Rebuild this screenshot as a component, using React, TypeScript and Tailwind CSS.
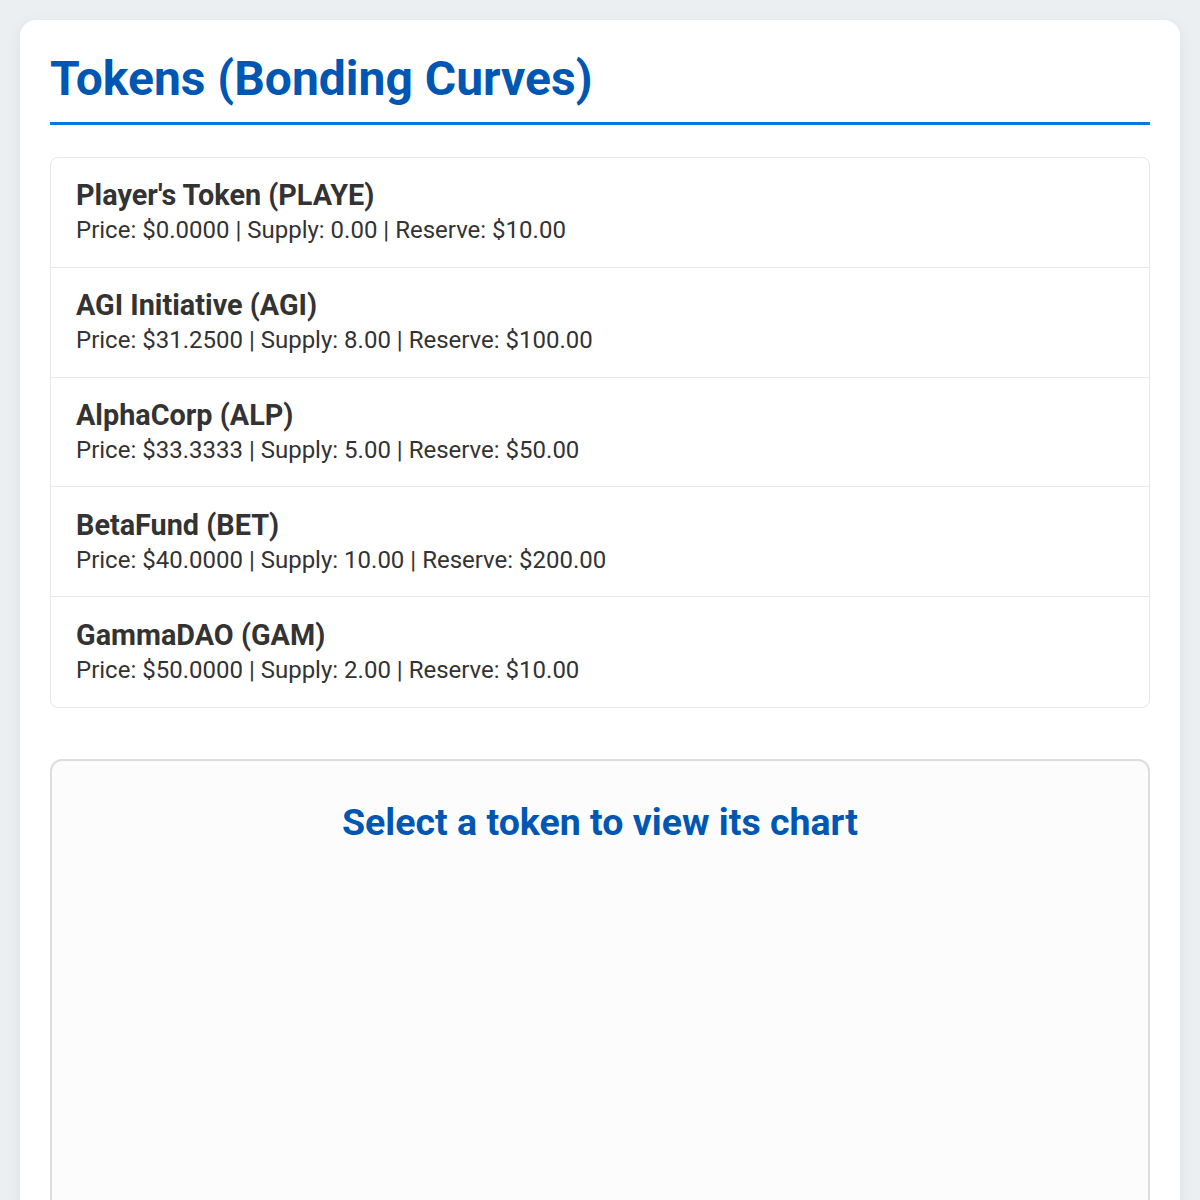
import React from 'react';

const tokens = [
  { name: "Player's Token", symbol: 'PLAYE', price: '0.0000', supply: '0.00', reserve: '10.00' },
  { name: 'AGI Initiative', symbol: 'AGI', price: '31.2500', supply: '8.00', reserve: '100.00' },
  { name: 'AlphaCorp', symbol: 'ALP', price: '33.3333', supply: '5.00', reserve: '50.00' },
  { name: 'BetaFund', symbol: 'BET', price: '40.0000', supply: '10.00', reserve: '200.00' },
  { name: 'GammaDAO', symbol: 'GAM', price: '50.0000', supply: '2.00', reserve: '10.00' },
];

export default function App() {
  return (
    <div className="min-h-[1200px] bg-[#eceff2] p-5 font-['Roboto','Liberation_Sans',sans-serif]">
      <div className="rounded-2xl bg-white p-[30px] shadow-[0_4px_16px_rgba(0,0,0,0.06)]">
        <h2 className="border-b-[3px] border-[#0078e7] pb-[14px] text-[48px] font-bold leading-[58px] text-[#0056b3]">
          Tokens (Bonding Curves)
        </h2>

        <ul className="mt-8 overflow-hidden rounded-lg border border-[#e8e8e8]">
          {tokens.map((t) => (
            <li
              key={t.symbol}
              className="flex h-[109.8px] flex-col justify-center border-b border-[#e8e8e8] px-[25px] text-[#333] last:border-b-0"
            >
              <div className="text-[28.8px] font-bold leading-[36px]">
                {t.name} ({t.symbol})
              </div>
              <div className="text-[24px] leading-[34px]">
                Price: ${t.price} | Supply: {t.supply} | Reserve: ${t.reserve}
              </div>
            </li>
          ))}
        </ul>

        <div className="mt-[51px] h-[560px] rounded-xl border-2 border-[#dddddd] bg-[#fcfcfc] pt-[39px]">
          <h3 className="text-center text-[37.5px] font-bold leading-[44px] text-[#0056b3]">
            Select a token to view its chart
          </h3>
        </div>
      </div>
    </div>
  );
}
